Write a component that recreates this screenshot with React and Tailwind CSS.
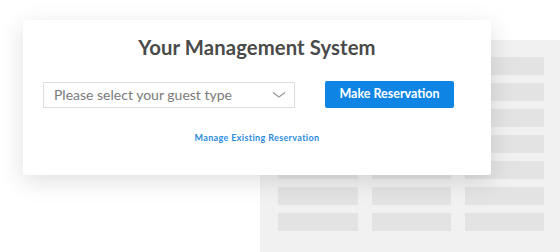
export default function App() {
  const rows = [0, 1, 2, 3, 4, 5, 6];
  return (
    <div className="relative w-[560px] h-[252px] overflow-hidden bg-white" style={{ fontFamily: "Lato, 'Noto Sans', sans-serif" }}>
      <div className="absolute left-[260px] top-[40px] w-[320px] h-[212px] bg-[#f1f1f1] pl-[18px] pt-[17px]">
        <div className="flex flex-col gap-[8px]">
          {rows.map((r) => (
            <div key={r} className="flex gap-[14px]">
              <div className="w-[80px] h-[18px] bg-[#e3e3e3]" />
              <div className="w-[79px] h-[18px] bg-[#e3e3e3]" />
              <div className="w-[79px] h-[18px] bg-[#e3e3e3]" />
            </div>
          ))}
        </div>
      </div>
      <div className="absolute left-[23px] top-[20px] w-[468px] h-[155px] bg-white rounded-[2px] shadow-[0_6px_24px_rgba(0,0,0,0.13)] flex flex-col items-center">
        <h1 className="mt-[15px] text-[20.3px] leading-[24px] font-bold text-[#4a4a4a] tracking-[0.1px]">Your Management System</h1>
        <div className="mt-[22px] w-full pl-[20px] pr-[37px] flex items-center justify-between">
          <div className="w-[252px] h-[26px] border border-[#dedede] flex items-center justify-between pl-[10px] pr-[8px]">
            <span className="text-[14px] text-[#7a7a7a]">Please select your guest type</span>
            <svg width="14" height="8" viewBox="0 0 14 8" fill="none">
              <path d="M1 1.5 L7 6 L13 1.5" stroke="#9a9a9a" strokeWidth="1.2" />
            </svg>
          </div>
          <button className="w-[129px] h-[27px] bg-[#0e85e4] rounded-[2px] text-white text-[12.5px] font-bold">Make Reservation</button>
        </div>
        <a className="mt-[23px] text-[9px] font-bold text-[#2b8ce0] tracking-[0.35px]">Manage Existing Reservation</a>
      </div>
    </div>
  );
}
